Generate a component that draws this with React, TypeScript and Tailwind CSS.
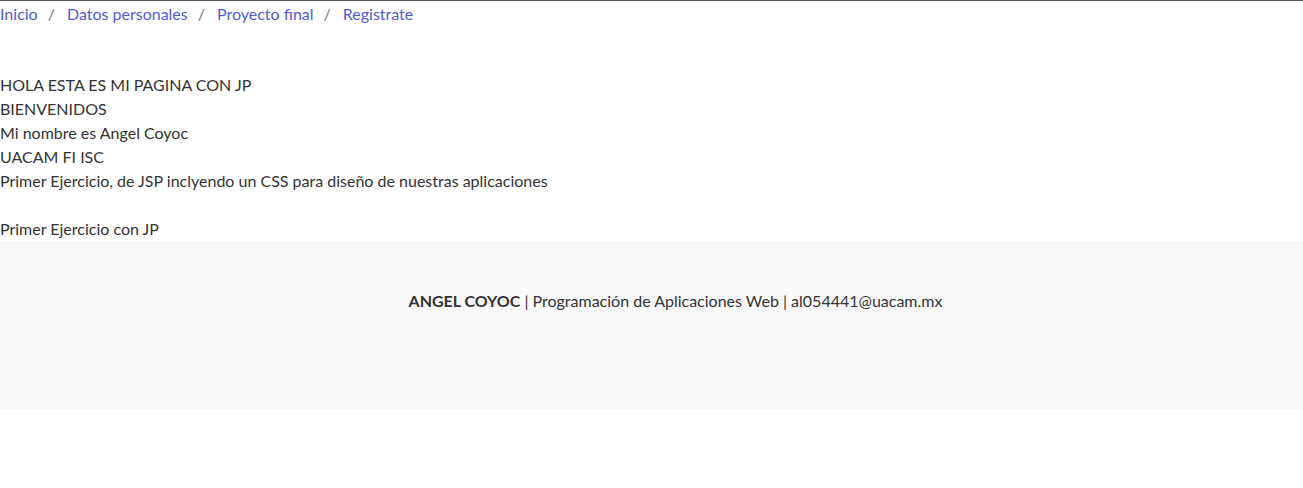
const crumbs = ["Inicio", "Datos personales", "Proyecto final", "Registrate"];

const lines = [
  "HOLA ESTA ES MI PAGINA CON JP",
  "BIENVENIDOS",
  "Mi nombre es Angel Coyoc",
  "UACAM FI ISC",
  "Primer Ejercicio, de JSP inclyendo un CSS para diseño de nuestras aplicaciones",
];

export default function App() {
  return (
    <div
      className="min-h-screen bg-white text-[16px] leading-6 text-[#333]"
      style={{ fontFamily: '"Segoe UI", Lato, "Noto Sans", sans-serif' }}
    >
      <nav className="border-t border-[#555] pt-px">
        <ol className="flex">
          {crumbs.map((c, i) => (
            <li key={c} className="flex">
              {i > 0 && <span className="pl-[10px] pr-3 text-[#6c757d]">/</span>}
              <a href="#" className="text-[#4f5bd5]">
                {c}
              </a>
            </li>
          ))}
        </ol>
      </nav>

      <main className="mt-[47px]">
        {lines.map((l) => (
          <p key={l}>{l}</p>
        ))}
        <p className="mt-6">Primer Ejercicio con JP</p>
      </main>

      <footer className="h-[168px] bg-[#f9f9f9] pt-12 pl-12 text-center">
        <p>
          <strong className="font-bold">ANGEL COYOC</strong> | Programación de
          Aplicaciones Web | al054441@uacam.mx
        </p>
      </footer>
    </div>
  );
}
